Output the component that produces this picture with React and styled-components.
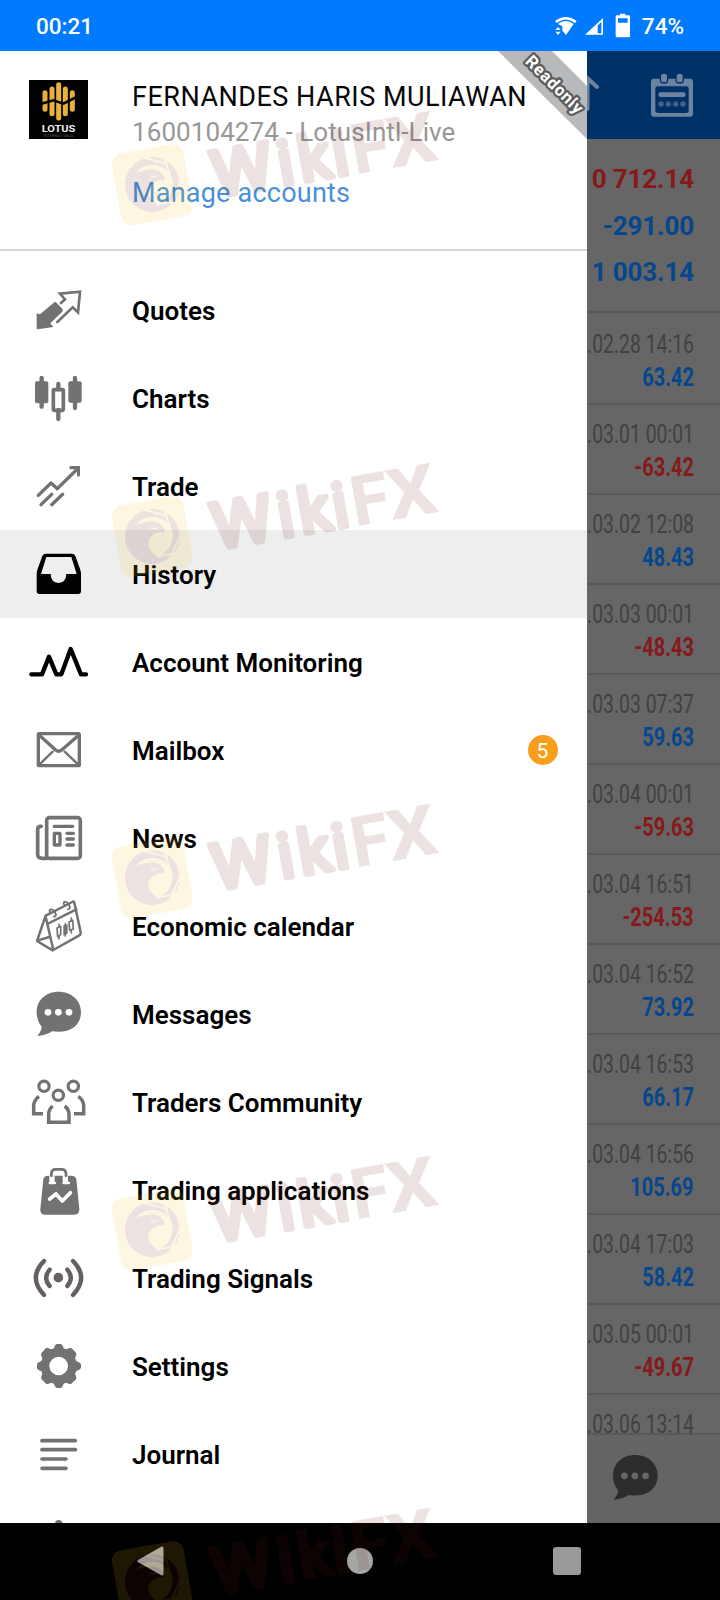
import React from "react";
import styled, { createGlobalStyle } from "styled-components";

const Global = createGlobalStyle`
  * { box-sizing: border-box; }
  body { margin: 0; background: #000; font-family: Roboto, "Liberation Sans", sans-serif; }
`;
const Screen = styled.div`
  position: relative; width: 720px; height: 1600px; overflow: hidden;
  display: flex; flex-direction: column; background: #000;
`;
const StatusBar = styled.header`
  height: 51px; flex: none; background: #007aff; color: #fff;
  display: flex; align-items: center; justify-content: space-between;
  padding: 1px 36px 0 36px; font-size: 22.5px; font-weight: 500;
`;
const Clock = styled.span`letter-spacing: 0;`;
const StatusIcons = styled.div`display: flex; align-items: center; gap: 11px;`;
const Main = styled.div`height: 1471.5px; flex: none; display: flex; overflow: hidden;`;
const Drawer = styled.aside`
  position: relative; width: 587px; flex: none; background: #fff;
  display: flex; flex-direction: column; overflow: hidden;
`;
const Account = styled.section`
  height: 200px; flex: none; border-bottom: 2px solid #d6d6d6;
  display: flex; padding: 29px 0 0 29px; gap: 44px;
`;
const Person = styled.div`display: flex; flex-direction: column; white-space: nowrap; padding-top: 1px;`;
const Name = styled.div`font-size: 27px; line-height: 32px; color: #080808; letter-spacing: 0.5px;`;
const Login = styled.div`font-size: 26px; line-height: 39px; color: #979797; letter-spacing: 0.08px;`;
const Manage = styled.a`font-size: 27px; line-height: 32px; margin-top: 25px; color: #4a90d9; letter-spacing: 0.22px;`;
const Ribbon = styled.svg`position: absolute; top: 0; right: 0;`;
const Menu = styled.nav`padding-top: 15px; display: flex; flex-direction: column;`;
const Item = styled.div`
  height: 88px; flex: none; display: flex; align-items: center; padding: 0 29px 0 24px;
  background: ${p => (p.$active ? "#eee" : "transparent")};
`;
const Icon = styled.svg`
  width: 70px; height: 70px; flex: none; margin-right: 38px;
  color: ${p => p.$tint}; fill: currentColor; stroke: none; overflow: visible;
`;
const Label = styled.span`
  flex: 1; font-size: 26px; font-weight: 600; color: #000; white-space: nowrap;
  padding-top: 1px;
`;
const Badge = styled.span`
  width: 30px; height: 30px; border-radius: 50%; background: #f99d1c; color: #fff;
  font-size: 21px; padding: 1px 1px 0 0; display: flex; align-items: center; justify-content: center;
`;
const Side = styled.div`flex: 1; min-width: 0; background: #666; display: flex; flex-direction: column; overflow: hidden;`;
const TopBar = styled.div`
  height: 88px; flex: none; background: #003166; display: flex; justify-content: space-between;
  align-items: flex-start; padding: 21px 24px 0 0;
`;
const Summary = styled.div`
  height: 174px; flex: none; border-bottom: 2px solid #595959; padding: 17px 26px 0 0;
  display: flex; flex-direction: column; align-items: flex-end;
`;
const Total = styled.div`
  font-size: 26px; font-weight: 700; line-height: 46.7px; white-space: nowrap; letter-spacing: -0.15px;
  color: ${p => (p.$loss ? "#85191b" : "#06468c")};
`;
const Deals = styled.div`flex: 1; overflow: hidden; padding-top: 2px;`;
const Deal = styled.div`
  height: 90px; border-bottom: 2px solid #595959; padding: 13px 26px 0 0;
  display: flex; flex-direction: column; align-items: flex-end; white-space: nowrap;
`;
const Narrow = styled.div`
  font-size: 25.5px; line-height: 32.5px; transform-origin: right center; transform: scaleX(${p => (p.$bold ? 0.785 : 0.76)});
  font-weight: ${p => (p.$bold ? 700 : 400)}; color: ${p => p.$tone};
`;
const BottomBar = styled.div`
  height: 89.5px; flex: none; background: #646464; border-top: 2px solid #595959; padding: 20px 0 0 26px;
`;
const NavBar = styled.footer`
  flex: 1; background: #000; display: flex; align-items: center; padding-left: 137px;
`;
const NavGlyph = styled.svg`margin-right: ${p => p.$gap}px; flex: none;`;
const Mark = styled.svg`position: absolute; left: 100px; top: ${p => p.$top}px; opacity: 0.12; pointer-events: none;`;

const line = (w, extra) => ({ fill: "none", stroke: "currentColor", strokeWidth: w, strokeLinecap: "round", strokeLinejoin: "round", ...extra });

const ICONS = {
  quotes: [45, <>
    <path d="M110 160 120 163 163 127Q167 125 170 129L187 146Q190 151 187 155L151 190 160 201 112 208Q110 208 110 204Z" />
    <path d="M183 129 195 118 180 101 240 95 234 157 218 142 172 186" {...line(8, { strokeLinejoin: "miter" })} />
  </>],
  charts: [309, <>
    <rect x="105" y="364" width="40" height="66" rx="6" /><rect x="205" y="364" width="40" height="64" rx="6" />
    <path d="M125 354V440M225 354V444M175 372V388M175 450V477" {...line(13)} />
    <rect x="160" y="389" width="30" height="62" rx="3" {...line(11)} />
  </>],
  trade: [573, <>
    <path d="M115 706 153 669 172 686 232 627M123 734 155 703M155 734 188 703" {...line(10)} />
    <path d="M208 623Q208 618 213 618H240V645Q240 651 234 650 231 649 231 645V628H213Q208 628 208 623Z" />
  </>],
  history: [57, <>
    <path fillRule="evenodd" d="M138 101H215Q223 101 226 108L241 149 243 160V214Q243 222 235 222H118Q110 222 110 214V160L112 149 127 108Q130 101 138 101ZM139 111 123 162H152Q153 188 175 189 198 188 199 162H230L214 111Z" />
  </>],
  monitoring: [321, <path d="M94 463H126L147 410 169 463H184L212 387 243 463H258" {...line(13)} />],
  mailbox: [585, <>
    <rect x="115" y="641" width="123" height="96" rx="3" {...line(10)} />
    <path d="M118 646 167 690Q176 697 185 690L236 646" {...line(10)} /><path d="M118 734 158 695M235 734 194 695" {...line(7)} />
  </>],
  news: [39, <>
    <rect x="140" y="83" width="101" height="122" rx="8" {...line(11)} />
    <path d="M124 109H122Q113 109 113 118V193Q113 205 127 205H140" {...line(11)} />
    <path d="M163 109H218M201 130H220M201 147H220M201 165H220" {...line(10)} />
    <rect x="163" y="130" width="17" height="35" rx="1" {...line(10)} />
  </>],
  calendar: [303, <>
    <path d="M137 377 217 336Q222 333 223 338L242 427Q243 433 238 436L160 480 137 380ZM137 377 111 453 158 481M142 402 229 358M112 452 148 441" {...line(7.5)} />
    <path d="M150 366Q146 359 153 358 160 357 167 371 170 379 162 380M193 344Q188 337 195 335 203 336 209 349 212 357 204 358" {...line(5.5)} />
    <path d="M177 403V411M177 438V446M214 384V392M214 420V429M171 414 182 409V434L173 440ZM207 396 218 391 220 417 209 421Z" {...line(5)} />
    <path d="M190 406 194 404V398H198V404L203 401V430L198 434V440H194V436L190 437Z" />
  </>],
  messages: [567, <>
    <path d="M175 605C214 605 243 630 243 666C243 706 211 732 156 724Q137 737 112 738Q125 722 125 711Q110 692 110 666C110 630 138 605 175 605Z" />
    <g fill="#fff"><circle cx="144" cy="667" r="10" /><circle cx="175" cy="667" r="10" /><circle cx="207" cy="667" r="10" /></g>
  </>],
  community: [51, <>
    <g {...line(9.5)}><circle cx="132" cy="109" r="15.5" /><circle cx="220" cy="109" r="15.5" /><circle cx="175" cy="136" r="15.5" /></g>
    <path d="M117 139Q101 151 101 168V191H129M235 139Q251 151 251 168V191H222M158 168Q146 178 146 193V217H207V193Q207 178 194 168" {...line(10.5, { strokeLinecap: "butt", strokeLinejoin: "miter" })} />
  </>],
  apps: [315, <>
    <path d="M144 377H214Q227 377 229 388L238 477Q239 494 223 494H135Q119 493 121 477L130 388Q132 377 144 377Z" />
    <path d="M156 391V371Q156 358 167 358H185Q196 358 196 371V391" {...line(16, { stroke: "#fff" })} />
    <path d="M154 377V371Q154 358 167 358H185Q198 358 198 371V377" {...line(8)} />
    <path d="M149 399H165M190 399H207" {...line(7, { stroke: "#fff" })} />
    <path d="M149 447 168 432 187 453 211 428" {...line(11, { stroke: "#fff" })} />
  </>],
  signals: [579, <>
    <circle cx="175" cy="683" r="14.5" />
    <path d="M132 633Q83 683 132 735M219 633Q268 683 219 735M149 659Q128 683 149 708M202 659Q223 683 202 708" {...line(13)} />
  </>],
  settings: [93, <>
    <path fillRule="evenodd" d="M170 132H182Q188 133 191 145L199 148Q210 142 214 144L228 158Q231 163 225 175L229 183Q240 187 243 192V204Q240 210 229 213L225 222Q231 233 228 238L214 251Q210 254 199 248L191 251Q188 262 182 264H170Q165 262 162 251L153 248Q142 254 138 251L125 238Q121 233 127 222L124 213Q112 210 111 204V192Q112 187 124 183L127 175Q121 163 125 158L138 144Q142 142 153 148L162 145Q165 133 170 132ZM176 170A28 28 0 1 0 176 226A28 28 0 1 0 176 170Z" />
  </>],
  journal: [357, <path d="M126 422H226M126 449H226M126 477H198M126 505H198" {...line(11)} />],
  about: [621, <circle cx="176" cy="671" r="11" />],
};
const MENU = [
  ["quotes", "Quotes"], ["charts", "Charts"], ["trade", "Trade"], ["history", "History"],
  ["monitoring", "Account Monitoring"], ["mailbox", "Mailbox"], ["news", "News"],
  ["calendar", "Economic calendar"], ["messages", "Messages"], ["community", "Traders Community"],
  ["apps", "Trading applications"], ["signals", "Trading Signals"], ["settings", "Settings"],
  ["journal", "Journal"], ["about", ""],
];
const TINTS = { history: "#000", monitoring: "#000", signals: "#665f5d" };
const DEALS = [
  ["2022.02.28 14:16", "63.42"], ["2022.03.01 00:01", "-63.42"], ["2022.03.02 12:08", "48.43"],
  ["2022.03.03 00:01", "-48.43"], ["2022.03.03 07:37", "59.63"], ["2022.03.04 00:01", "-59.63"],
  ["2022.03.04 16:51", "-254.53"], ["2022.03.04 16:52", "73.92"], ["2022.03.04 16:53", "66.17"],
  ["2022.03.04 16:56", "105.69"], ["2022.03.04 17:03", "58.42"], ["2022.03.05 00:01", "-49.67"],
  ["2022.03.06 13:14", ""],
];
const MARKS = [98, 450, 791, 1143, 1495];

const Logo = styled.svg`flex: none;`;

function LotusLogo() {
  return (
    <Logo width="59" height="59" viewBox="87 240 177 177">
      <rect x="87" y="240" width="177" height="177" fill="#000" />
      <g stroke="#e8b13a" strokeWidth="15" strokeLinecap="round">
        <path d="M135 278V328M156 267V341M176 254V354M196 267V341M217 278V328" />
      </g>
      <path d="M122 312 160 301 190 311 230 291" fill="none" stroke="#000" strokeWidth="8" />
      <text x="125" y="396" textLength="101" lengthAdjust="spacingAndGlyphs" fontSize="27" fontWeight="700" fill="#eee">LOTUS</text>
      <text x="130" y="412" textLength="90" fontSize="9" fill="#666">INTERNATIONAL</text>
    </Logo>
  );
}
function Watermark({ top }) {
  return (
    <Mark $top={top} width="350" height="140" viewBox="0 0 1050 420">
      <g transform="translate(157 260) rotate(-10)">
        <rect x="-109" y="-109" width="218" height="218" rx="32" fill="#f5c61c" />
        <circle r="71" fill="none" stroke="#641e14" strokeWidth="22" />
        <g stroke="#f5c61c" strokeWidth="6">
          <path d="M-14 -86 56 -52M50 -70 60 10M84 10 44 68M60 60 -20 62" />
        </g>
        <path fill="#641e14" d="M-82 4Q-76 -30 -52 -40 -24 -50 2 -46 24 -44 34 -28 42 -18 37 -4 26 -14 10 -8-8 -2-14 12-22 36 2 58L6 78Q-22 76-30 62L-38 66Q-50 58-48 48L-60 50Q-66 38-60 28L-74 28Q-78 16-72 8Z" />
        <path d="M-2 -27Q8 -21 20 -24" fill="none" stroke="#f5c61c" strokeWidth="4" />
      </g>
      <g transform="translate(345 303) rotate(-10)" fill="#641e14" stroke="#641e14" strokeLinejoin="round" fontFamily="Roboto, sans-serif">
        <text transform="scale(1.07 1)" fontSize="192" strokeWidth="17" x="2" y="-5">W</text>
        <text fontSize="186" strokeWidth="17" x="204 267 370" y="-5">iki</text>
        <text fontSize="208" fontWeight="700" strokeWidth="2" x="427" y="0">F</text>
        <text transform="translate(540 0) scale(1.09 1)" fontSize="208" fontWeight="700" strokeWidth="2">X</text>
      </g>
    </Mark>
  );
}
function ChatGlyph() {
  return (
    <svg width="45" height="45" viewBox="110 605 134 134">
      <path fill="#2d2d2d" d="M175 605C214 605 243 630 243 666C243 706 211 732 156 724Q137 737 112 738Q125 722 125 711Q110 692 110 666C110 630 138 605 175 605Z" />
      <g fill="#666"><circle cx="144" cy="667" r="10" /><circle cx="175" cy="667" r="10" /><circle cx="207" cy="667" r="10" /></g>
    </svg>
  );
}

export default function App() {
  return (
    <Screen>
      <Global />
      <StatusBar>
        <Clock>00:21</Clock>
        <StatusIcons>
          <svg width="77" height="26" viewBox="345 38 231 78" fill="#fff">
            <path d="M348 62Q380 38 413 62L408 68Q380 47 353 68ZM380 62Q393 62 404 71L381 104 370 91 370 78 357 71Q367 62 380 62Z" />
            <path d="M349 89 357 80 365 89ZM349 94H365L357 104Z" />
            <path fillRule="evenodd" d="M438 103 492 53V103ZM476 76V99H487V64Z" />
            <path fillRule="evenodd" d="M543 40H559V45H569Q573 45 573 49V107Q573 111 569 111H534Q530 111 530 107V49Q530 45 534 45H543ZM537 54V67H566V54Z" />
          </svg>
          <span>74%</span>
        </StatusIcons>
      </StatusBar>
      <Main>
        <Drawer>
          <Account>
            <LotusLogo />
            <Person>
              <Name>FERNANDES HARIS MULIAWAN</Name>
              <Login>1600104274 - LotusIntl-Live</Login>
              <Manage>Manage accounts</Manage>
            </Person>
            <Ribbon width="90" height="90" viewBox="0 0 90 90">
              <path d="M1 0H55L90 35V88Z" fill="#b7b9bb" />
              <text transform="translate(57 34) rotate(45)" textAnchor="middle" y="5" textLength="74"
                fontSize="17" fontWeight="700" fill="#fff" stroke="#5c5c5c" strokeWidth="4.5" strokeLinejoin="round" paintOrder="stroke">Readonly</text>
            </Ribbon>
          </Account>
          <Menu>
            {MENU.map(([id, text]) => (
              <Item key={id} $active={id === "history"}>
                <Icon viewBox={`72 ${ICONS[id][0]} 210 210`} $tint={TINTS[id] || "#727272"}>{ICONS[id][1]}</Icon>
                <Label>{text}</Label>
                {id === "mailbox" && <Badge>5</Badge>}
              </Item>
            ))}
          </Menu>
        </Drawer>
        <Side>
          <TopBar>
            <svg width="14" height="45" viewBox="0 0 14 45" fill="none" stroke="#6d839f" strokeWidth="4" strokeLinecap="round">
              <path d="M-2 4 10 15M0.5 9V37" />
            </svg>
            <svg width="46" height="47" viewBox="630 215 138 141" fill="#6d839f">
              <path fillRule="evenodd" d="M640 235H752Q759 236 759 243V340Q759 349 750 349H642Q633 349 633 340V243Q633 236 640 235ZM652 258Q646 258 646 265V330Q646 338 654 338H739Q746 338 746 330V265Q746 258 739 258Z" />
              <g stroke="#003166" strokeWidth="4"><rect x="661" y="218" width="22" height="30" rx="10" /><rect x="708" y="218" width="22" height="30" rx="10" /></g>
              <rect x="655" y="276" width="82" height="14" rx="7" />
              <g opacity=".6"><circle cx="663" cy="311" r="8" /><circle cx="685" cy="311" r="8" /><circle cx="707" cy="311" r="8" /><circle cx="729" cy="311" r="8" /></g>
            </svg>
          </TopBar>
          <Summary>
            <Total $loss>0 712.14</Total>
            <Total>-291.00</Total>
            <Total>1 003.14</Total>
          </Summary>
          <Deals>
            {DEALS.map(([date, value]) => (
              <Deal key={date}>
                <Narrow $tone="#414141">{date}</Narrow>
                <Narrow $bold $tone={value[0] === "-" ? "#85191b" : "#06468c"}>{value}</Narrow>
              </Deal>
            ))}
          </Deals>
          <BottomBar><ChatGlyph /></BottomBar>
        </Side>
      </Main>
      <NavBar>
        <NavGlyph $gap={183.3} width="27" height="32" viewBox="0 0 27 32"><path d="M2 16 25 3V29Z" fill="#a6a6a6" stroke="#a6a6a6" strokeWidth="3" strokeLinejoin="round" /></NavGlyph>
        <NavGlyph $gap={180} width="26" height="26" viewBox="0 0 26 26"><circle cx="13" cy="13" r="13" fill="#a6a6a6" /></NavGlyph>
        <NavGlyph $gap={0} width="28" height="28" viewBox="0 0 28 28"><rect width="28" height="28" rx="3" fill="#999" /></NavGlyph>
      </NavBar>
      {MARKS.map(top => <Watermark key={top} top={top} />)}
    </Screen>
  );
}
